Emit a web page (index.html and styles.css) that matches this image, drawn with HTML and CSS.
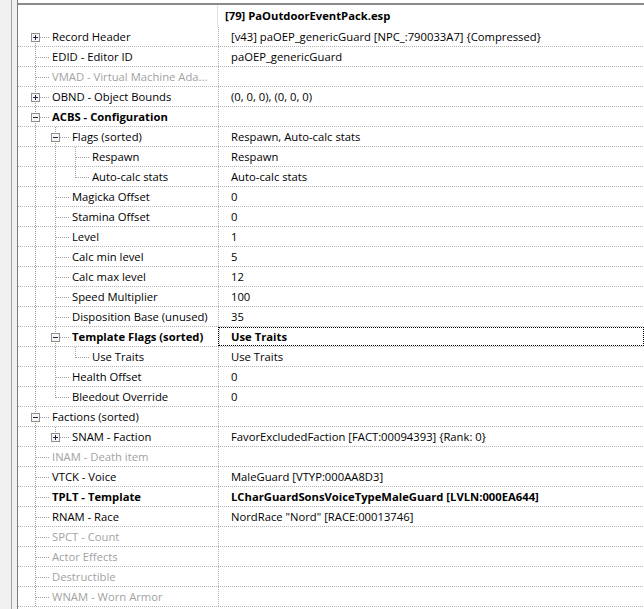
FILE: index.html
```html
<!DOCTYPE html>
<html lang="en">
<head>
    <meta charset="UTF-8">
    <title>NPC_ record view</title>
    <link rel="stylesheet" href="styles.css">
</head>
<body>
    <div class="window">
        <div class="side">
            <div class="side-strip"></div>
            <div class="side-gap"></div>
        </div>

        <div class="grid">
            <div class="head">
                <div class="head-tree"></div>
                <div class="head-val">[79] PaOutdoorEventPack.esp</div>
            </div>

            <div class="row">
                <div class="tree"><span class="g node first"><svg class="btn" width="9" height="9"><rect x="0.5" y="0.5" width="8" height="8" fill="#f6f6f6" stroke="#8e8f8f"/><path d="M2 4.5h5M4.5 2v5" stroke="#1f2440"/></svg></span><span class="label">Record Header</span></div>
                <div class="val">[v43] paOEP_genericGuard [NPC_:790033A7] {Compressed}</div>
            </div>
            <div class="row">
                <div class="tree"><span class="g node tee"></span><span class="label">EDID - Editor ID</span></div>
                <div class="val">paOEP_genericGuard</div>
            </div>
            <div class="row">
                <div class="tree"><span class="g node tee"></span><span class="label dim">VMAD - Virtual Machine Ada...</span></div>
                <div class="val"></div>
            </div>
            <div class="row">
                <div class="tree"><span class="g node tee"><svg class="btn" width="9" height="9"><rect x="0.5" y="0.5" width="8" height="8" fill="#f6f6f6" stroke="#8e8f8f"/><path d="M2 4.5h5M4.5 2v5" stroke="#1f2440"/></svg></span><span class="label">OBND - Object Bounds</span></div>
                <div class="val">(0, 0, 0), (0, 0, 0)</div>
            </div>
            <div class="row">
                <div class="tree"><span class="g node tee"><svg class="btn" width="9" height="9"><rect x="0.5" y="0.5" width="8" height="8" fill="#f6f6f6" stroke="#8e8f8f"/><path d="M2 4.5h5" stroke="#1f2440"/></svg></span><span class="label bold">ACBS - Configuration</span></div>
                <div class="val"></div>
            </div>

            <div class="row">
                <div class="tree"><span class="g pass"></span><span class="g node tee"><svg class="btn" width="9" height="9"><rect x="0.5" y="0.5" width="8" height="8" fill="#f6f6f6" stroke="#8e8f8f"/><path d="M2 4.5h5" stroke="#1f2440"/></svg></span><span class="label">Flags (sorted)</span></div>
                <div class="val">Respawn, Auto-calc stats</div>
            </div>
            <div class="row">
                <div class="tree"><span class="g pass"></span><span class="g pass"></span><span class="g node tee"></span><span class="label">Respawn</span></div>
                <div class="val">Respawn</div>
            </div>
            <div class="row">
                <div class="tree"><span class="g pass"></span><span class="g pass"></span><span class="g node elbow"></span><span class="label">Auto-calc stats</span></div>
                <div class="val">Auto-calc stats</div>
            </div>
            <div class="row">
                <div class="tree"><span class="g pass"></span><span class="g node tee"></span><span class="label">Magicka Offset</span></div>
                <div class="val">0</div>
            </div>
            <div class="row">
                <div class="tree"><span class="g pass"></span><span class="g node tee"></span><span class="label">Stamina Offset</span></div>
                <div class="val">0</div>
            </div>
            <div class="row">
                <div class="tree"><span class="g pass"></span><span class="g node tee"></span><span class="label">Level</span></div>
                <div class="val">1</div>
            </div>
            <div class="row">
                <div class="tree"><span class="g pass"></span><span class="g node tee"></span><span class="label">Calc min level</span></div>
                <div class="val">5</div>
            </div>
            <div class="row">
                <div class="tree"><span class="g pass"></span><span class="g node tee"></span><span class="label">Calc max level</span></div>
                <div class="val">12</div>
            </div>
            <div class="row">
                <div class="tree"><span class="g pass"></span><span class="g node tee"></span><span class="label">Speed Multiplier</span></div>
                <div class="val">100</div>
            </div>
            <div class="row">
                <div class="tree"><span class="g pass"></span><span class="g node tee"></span><span class="label">Disposition Base (unused)</span></div>
                <div class="val">35</div>
            </div>
            <div class="row">
                <div class="tree"><span class="g pass"></span><span class="g node tee"><svg class="btn" width="9" height="9"><rect x="0.5" y="0.5" width="8" height="8" fill="#f6f6f6" stroke="#8e8f8f"/><path d="M2 4.5h5" stroke="#1f2440"/></svg></span><span class="label bold">Template Flags (sorted)</span></div>
                <div class="val focused bold">Use Traits</div>
            </div>
            <div class="row">
                <div class="tree"><span class="g pass"></span><span class="g pass"></span><span class="g node elbow"></span><span class="label">Use Traits</span></div>
                <div class="val">Use Traits</div>
            </div>
            <div class="row">
                <div class="tree"><span class="g pass"></span><span class="g node tee"></span><span class="label">Health Offset</span></div>
                <div class="val">0</div>
            </div>
            <div class="row">
                <div class="tree"><span class="g pass"></span><span class="g node elbow"></span><span class="label">Bleedout Override</span></div>
                <div class="val">0</div>
            </div>

            <div class="row">
                <div class="tree"><span class="g node tee"><svg class="btn" width="9" height="9"><rect x="0.5" y="0.5" width="8" height="8" fill="#f6f6f6" stroke="#8e8f8f"/><path d="M2 4.5h5" stroke="#1f2440"/></svg></span><span class="label">Factions (sorted)</span></div>
                <div class="val"></div>
            </div>
            <div class="row">
                <div class="tree"><span class="g pass"></span><span class="g node elbow"><svg class="btn" width="9" height="9"><rect x="0.5" y="0.5" width="8" height="8" fill="#f6f6f6" stroke="#8e8f8f"/><path d="M2 4.5h5M4.5 2v5" stroke="#1f2440"/></svg></span><span class="label">SNAM - Faction</span></div>
                <div class="val">FavorExcludedFaction [FACT:00094393] {Rank: 0}</div>
            </div>
            <div class="row">
                <div class="tree"><span class="g node tee"></span><span class="label dim">INAM - Death item</span></div>
                <div class="val"></div>
            </div>
            <div class="row">
                <div class="tree"><span class="g node tee"></span><span class="label">VTCK - Voice</span></div>
                <div class="val">MaleGuard [VTYP:000AA8D3]</div>
            </div>
            <div class="row">
                <div class="tree"><span class="g node tee"></span><span class="label bold">TPLT - Template</span></div>
                <div class="val bold">LCharGuardSonsVoiceTypeMaleGuard [LVLN:000EA644]</div>
            </div>
            <div class="row">
                <div class="tree"><span class="g node tee"></span><span class="label">RNAM - Race</span></div>
                <div class="val">NordRace "Nord" [RACE:00013746]</div>
            </div>
            <div class="row">
                <div class="tree"><span class="g node tee"></span><span class="label dim">SPCT - Count</span></div>
                <div class="val"></div>
            </div>
            <div class="row">
                <div class="tree"><span class="g node tee"></span><span class="label dim">Actor Effects</span></div>
                <div class="val"></div>
            </div>
            <div class="row">
                <div class="tree"><span class="g node tee"></span><span class="label dim">Destructible</span></div>
                <div class="val"></div>
            </div>
            <div class="row">
                <div class="tree"><span class="g node tee"></span><span class="label dim">WNAM - Worn Armor</span></div>
                <div class="val"></div>
            </div>
        </div>
    </div>
</body>
</html>
```

FILE: styles.css
```css
* {
    margin: 0;
    padding: 0;
    box-sizing: border-box;
}

body {
    width: 644px;
    height: 609px;
    overflow: hidden;
    background-color: #fff;
    color: #000;
    font-family: "Open Sans", "Noto Sans", sans-serif;
    font-size: 11.25px;
}

.window {
    display: flex;
    height: 609px;
}

/* left edge of the form */
.side {
    display: flex;
    flex: none;
    background-color: #f0f0f0;
}

.side-strip {
    width: 12px;
    border-right: 1px solid #a0a0a0;
}

.side-gap {
    width: 6px;
    border-right: 1px solid #7a7a7a;
}

.grid {
    flex: 1;
    margin-top: 3px;
    border-top: 2px solid #8a8a8a;
    overflow: hidden;
}

.head {
    display: grid;
    grid-template-columns: 200px 1fr;
    height: 22px;
}

.head-tree {
    border-right: 1px solid #e3e3e3;
}

.head-val {
    padding-left: 7px;
    line-height: 21px;
    font-weight: bold;
    white-space: nowrap;
}

/* rows */
.row {
    display: grid;
    grid-template-columns: 200px 1fr;
    height: 20px;
    background-image: repeating-linear-gradient(to right, #b4b4b4 0 1px, transparent 1px 2px);
    background-size: 100% 1px;
    background-position: left bottom;
    background-repeat: no-repeat;
}

.tree {
    display: flex;
    align-items: stretch;
    padding-left: 7px;
    height: 20px;
    white-space: nowrap;
    overflow: hidden;
}

.label {
    line-height: 19px;
}

.val {
    padding-left: 13px;
    line-height: 19px;
    white-space: nowrap;
    overflow: hidden;
    background-image: repeating-linear-gradient(to bottom, #b4b4b4 0 1px, transparent 1px 2px);
    background-size: 1px 100%;
    background-repeat: no-repeat;
}

.val.focused {
    border: 1px dotted #000;
    height: 19px;
    padding-left: 12px;
    line-height: 17px;
}

.bold {
    font-weight: bold;
}

.dim {
    color: #a2a2a2;
}

/* tree guide lines */
.g {
    flex: none;
    width: 20px;
    height: 20px;
    background-repeat: no-repeat;
}

.g.node {
    width: 27px;
    padding: 6px 0 0 6px;
}

.btn {
    display: block;
}

.g.pass {
    background-image: repeating-linear-gradient(to bottom, #a0a0a0 0 1px, transparent 1px 2px);
    background-size: 1px 20px;
    background-position: 10px 0;
}

.g.tee {
    background-image:
        repeating-linear-gradient(to bottom, #a0a0a0 0 1px, transparent 1px 2px),
        repeating-linear-gradient(to right, #a0a0a0 0 1px, transparent 1px 2px);
    background-size: 1px 20px, 13px 1px;
    background-position: 10px 0, 11px 10px;
}

.g.elbow {
    background-image:
        repeating-linear-gradient(to bottom, #a0a0a0 0 1px, transparent 1px 2px),
        repeating-linear-gradient(to right, #a0a0a0 0 1px, transparent 1px 2px);
    background-size: 1px 11px, 13px 1px;
    background-position: 10px 0, 11px 10px;
}

.g.first {
    background-image:
        repeating-linear-gradient(to bottom, #a0a0a0 0 1px, transparent 1px 2px),
        repeating-linear-gradient(to right, #a0a0a0 0 1px, transparent 1px 2px);
    background-size: 1px 10px, 13px 1px;
    background-position: 10px 10px, 11px 10px;
}
```
